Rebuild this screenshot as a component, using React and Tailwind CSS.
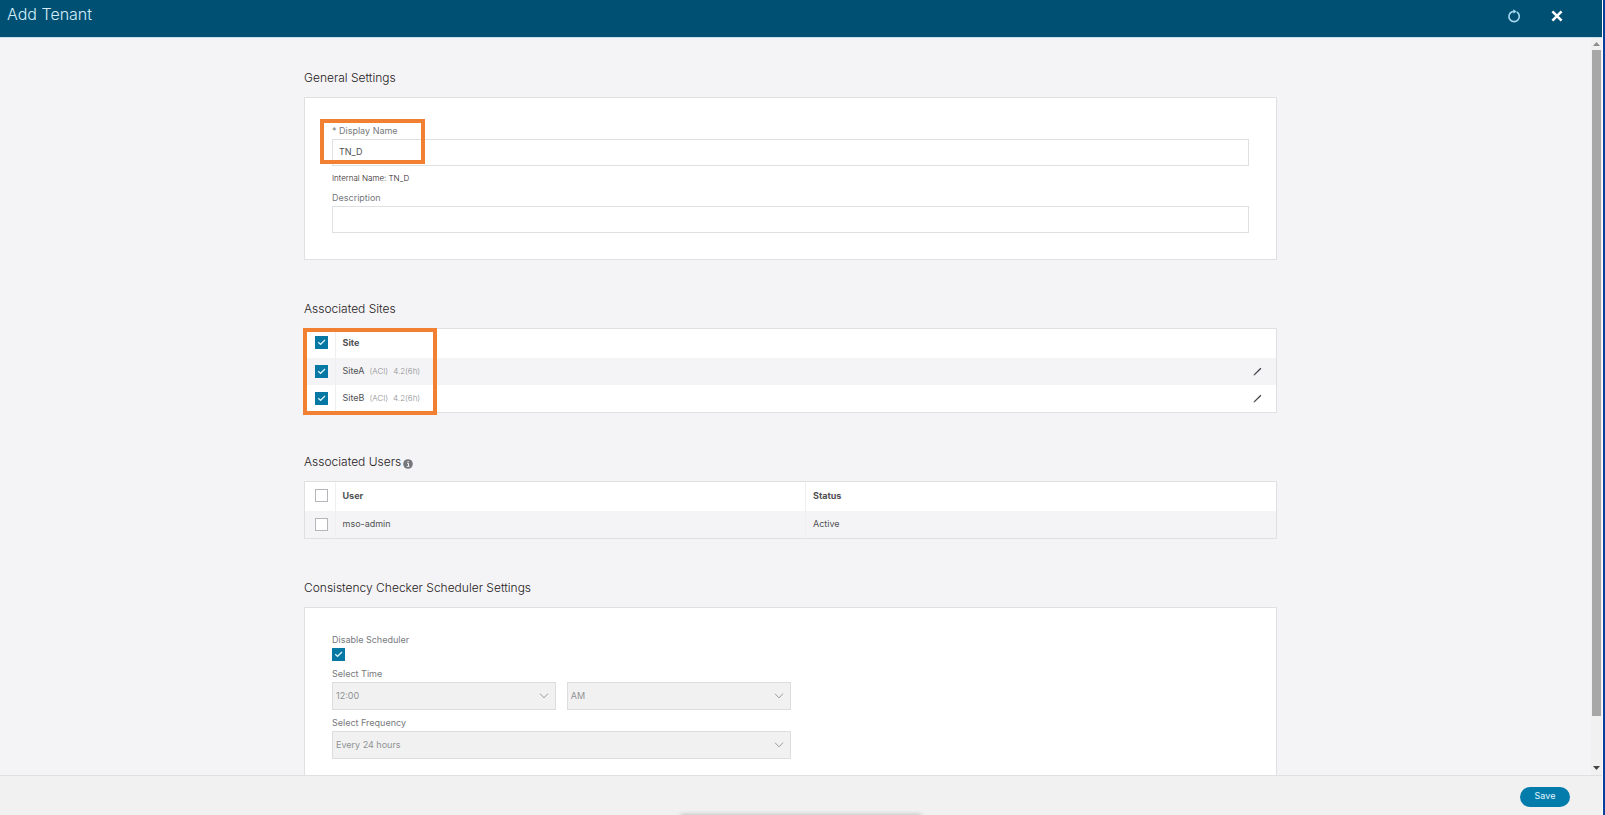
import React, { useState } from "react";

const sites = [
  { name: "SiteA", type: "(ACI)", version: "4.2(6h)" },
  { name: "SiteB", type: "(ACI)", version: "4.2(6h)" },
];

const users = [{ name: "mso-admin", status: "Active" }];

const Checkbox = ({ id, label, checked, onChange }) => (
  <span className="relative block size-[13px]">
    <input
      id={id}
      type="checkbox"
      aria-label={label}
      checked={checked}
      onChange={onChange}
      className="peer block size-[13px] appearance-none border border-[#b4b6b9] bg-white checked:border-[#0678a3] checked:bg-[#0678a3]"
    />
    <svg
      viewBox="0 0 13 13"
      className="pointer-events-none absolute inset-0 hidden size-[13px] peer-checked:block"
      fill="none"
      stroke="#d9f3ff"
      strokeWidth="1.3"
    >
      <path d="M3.2 6.2 5.6 8.3 10 4" />
    </svg>
  </span>
);

const Section = ({ title, info, children }) => (
  <section className="mb-[39px]">
    <h2 className="mb-[9px] flex h-5 items-center text-[12px] leading-5 font-light text-[#1f2022]">
      {title}
      {info && (
        <svg viewBox="0 0 10 10" className="mt-1 ml-[2px] size-[10px]">
          <circle cx="5" cy="5" r="4.8" fill="#75777a" />
          <path d="M4 4.2h1.5v3M3.8 7.3h2.6M4.6 2.5h1.1" stroke="#f4f4f6" fill="none" />
        </svg>
      )}
    </h2>
    {children}
  </section>
);

const Label = ({ htmlFor, children }) => (
  <label htmlFor={htmlFor} className="block h-[15px] text-[9px] leading-[14px] text-[#77797c]">
    {children}
  </label>
);

const Select = ({ id, label, value }) => (
  <div className="relative">
    <select
      id={id}
      aria-label={label}
      disabled
      defaultValue={value}
      className="block h-[28px] w-full appearance-none border border-[#dcdddf] bg-[#f1f1f1] px-[3px] pb-px text-[9px] text-[#8f9194]"
    >
      <option>{value}</option>
    </select>
    <svg
      viewBox="0 0 10 6"
      className="pointer-events-none absolute top-[11px] right-[7px] h-[6px] w-[10px]"
      fill="none"
      stroke="#9a9ca0"
    >
      <path d="M1 .7 5 4.9 9 .7" />
    </svg>
  </div>
);

const Pencil = () => (
  <svg viewBox="0 0 9 9" className="block size-[9px]">
    <path d="M1.7 7.4 7.9 1.2" stroke="#3f4144" strokeWidth="1.3" />
    <path d="M.5 8.6 1.1 6.8 2.3 8z" fill="#3f4144" />
  </svg>
);

const Scrollbar = () => (
  <div aria-hidden="true" className="flex w-[11px] flex-col items-center bg-[#f1f1f1]">
    <svg viewBox="0 0 7 4" className="mt-[4px] mb-[4px] h-[4px] w-[7px]">
      <path d="M0 4 3.5 0 7 4z" fill="#8b8d8f" />
    </svg>
    <div className="flex w-full flex-1 flex-col px-px">
      <div className="h-[93%] w-full bg-[#a6a7a6]" />
    </div>
    <svg viewBox="0 0 7 4" className="mb-[5px] h-[4px] w-[7px]">
      <path d="M0 0 3.5 4 7 0z" fill="#444648" />
    </svg>
  </div>
);

const App = () => {
  const [name, setName] = useState("TN_D");
  const [description, setDescription] = useState("");
  const [selectedSites, setSelectedSites] = useState(["SiteA", "SiteB"]);
  const [selectedUsers, setSelectedUsers] = useState([]);
  const [disabled, setDisabled] = useState(true);

  const toggle = (list, setList, item) =>
    setList(list.includes(item) ? list.filter((i) => i !== item) : [...list, item]);

  const toggleAll = (list, setList, all) => setList(list.length === all.length ? [] : all);

  const siteNames = sites.map((s) => s.name);
  const userNames = users.map((u) => u.name);

  return (
    <div className="flex h-screen bg-[#f4f4f6] font-['Inter','Liberation_Sans',sans-serif] text-[9px] text-[#505153]">
      <div className="flex min-w-0 flex-1 flex-col">
        <header className="flex h-[38px] shrink-0 items-start justify-between border-b border-[#c9dfeb] bg-[#005073] pr-[38px] pl-[7px]">
          <h1 className="pt-1 text-[16px] leading-5 font-light text-[#d3eefa]">Add Tenant</h1>
          <div className="flex items-center gap-[29px] pt-[9px]">
            <button type="button" aria-label="Refresh">
              <svg viewBox="0 0 14 14" className="block size-[14px]" fill="none" stroke="#a5d8f0" strokeWidth="1.6">
                <path d="M9.8 3A5.2 5.2 0 1 1 5 2.7L7.6 2.2" />
                <path d="M6.4.2v4.6L9.6 2.6z" fill="#a5d8f0" stroke="none" />
              </svg>
            </button>
            <button type="button" aria-label="Close">
              <svg viewBox="0 0 14 14" className="block size-[14px]" stroke="#fff" strokeWidth="2.6">
                <path d="M2.4 2.4l9.2 9.2M11.6 2.4l-9.2 9.2" />
              </svg>
            </button>
          </div>
        </header>

        <div className="flex min-h-0 flex-1">
          <main className="min-w-0 flex-1 overflow-y-auto pt-[30px] pr-[10px] [scrollbar-width:none]">
            <div className="mx-auto max-w-[973px]">
              <Section title="General Settings">
                <div className="border border-[#dfe0e2] bg-white px-[27px] pt-[26px] pb-[26px]">
                  <div className="relative">
                    <Label htmlFor="display-name">
                      <span className="inline-block w-[7px]">*</span>Display Name
                    </Label>
                    <input
                      id="display-name"
                      type="text"
                      value={name}
                      onChange={(e) => setName(e.target.value)}
                      className="block h-[27px] w-full border border-[#dfe0e2] bg-white px-[6px] pb-[2px]"
                    />
                    <div className="pointer-events-none absolute -top-[5px] -left-[12px] h-[45px] w-[105px] border-4 border-[#f28032]" />
                  </div>
                  <p className="my-[6px] text-[8px] leading-[13px] font-light text-[#1f2022]">Internal Name: {name}</p>
                  <Label htmlFor="description">Description</Label>
                  <input
                    id="description"
                    type="text"
                    value={description}
                    onChange={(e) => setDescription(e.target.value)}
                    className="block h-[27px] w-full border border-[#dfe0e2] bg-white px-[6px] pb-[2px]"
                  />
                </div>
              </Section>

              <Section title="Associated Sites">
                <div className="relative border border-[#dfe0e2] bg-white">
                  <table className="w-full table-fixed text-left">
                    <thead>
                      <tr className="h-[29px]">
                        <th className="w-[30px] border-r border-[#eeeff1] pb-[2px] pl-[10px]">
                          <Checkbox
                            label="Select all sites"
                            checked={selectedSites.length === sites.length}
                            onChange={() => toggleAll(selectedSites, setSelectedSites, siteNames)}
                          />
                        </th>
                        <th className="pb-[2px] pl-[7px] font-bold">Site</th>
                        <th className="w-[40px]" />
                      </tr>
                    </thead>
                    <tbody>
                      {sites.map((site) => (
                        <tr key={site.name} className="h-[27px] odd:bg-[#f4f4f6]">
                          <td className="border-r border-[#eeeff1] pl-[10px]">
                            <Checkbox
                              label={site.name}
                              checked={selectedSites.includes(site.name)}
                              onChange={() => toggle(selectedSites, setSelectedSites, site.name)}
                            />
                          </td>
                          <td className="pb-[2px] pl-[7px]">
                            {site.name}
                            <span className="ml-[5px] text-[8px] font-light text-[#8f9194]">{site.type}</span>
                            <span className="ml-[5px] text-[8px] font-light text-[#8f9194]">{site.version}</span>
                          </td>
                          <td className="pl-[17px]">
                            <button type="button" aria-label={`Edit ${site.name}`} className="block">
                              <Pencil />
                            </button>
                          </td>
                        </tr>
                      ))}
                    </tbody>
                  </table>
                  <div className="pointer-events-none absolute -top-px -bottom-[3px] -left-[2px] w-[134px] border-4 border-[#f28032]" />
                </div>
              </Section>

              <Section title="Associated Users" info>
                <div className="border border-[#dfe0e2] bg-white">
                  <table className="w-full table-fixed text-left">
                    <thead>
                      <tr className="h-[29px]">
                        <th className="w-[30px] border-r border-[#eeeff1] pb-[2px] pl-[10px]">
                          <Checkbox
                            label="Select all users"
                            checked={selectedUsers.length === users.length}
                            onChange={() => toggleAll(selectedUsers, setSelectedUsers, userNames)}
                          />
                        </th>
                        <th className="border-r border-[#eeeff1] pb-[2px] pl-[7px] font-bold">User</th>
                        <th className="pb-[2px] pl-[7px] font-bold">Status</th>
                      </tr>
                    </thead>
                    <tbody>
                      {users.map((user) => (
                        <tr key={user.name} className="h-[27px] odd:bg-[#f4f4f6]">
                          <td className="border-r border-[#eeeff1] pl-[10px]">
                            <Checkbox
                              label={user.name}
                              checked={selectedUsers.includes(user.name)}
                              onChange={() => toggle(selectedUsers, setSelectedUsers, user.name)}
                            />
                          </td>
                          <td className="border-r border-[#eeeff1] pb-[2px] pl-[7px]">{user.name}</td>
                          <td className="pb-[2px] pl-[7px]">{user.status}</td>
                        </tr>
                      ))}
                    </tbody>
                  </table>
                </div>
              </Section>

              <Section title="Consistency Checker Scheduler Settings">
                <div className="border border-[#dfe0e2] bg-white px-[27px] pt-[25px] pb-[27px]">
                  <div className="w-1/2">
                    <Label htmlFor="disable-scheduler">Disable Scheduler</Label>
                    <Checkbox id="disable-scheduler" checked={disabled} onChange={() => setDisabled(!disabled)} />
                    <div className="mt-[6px]">
                      <Label htmlFor="time">Select Time</Label>
                      <div className="grid grid-cols-2 gap-[11px]">
                        <Select id="time" value="12:00" />
                        <Select id="meridiem" label="AM or PM" value="AM" />
                      </div>
                    </div>
                    <div className="mt-[6px]">
                      <Label htmlFor="frequency">Select Frequency</Label>
                      <Select id="frequency" value="Every 24 hours" />
                    </div>
                  </div>
                </div>
              </Section>
            </div>
          </main>
          <Scrollbar />
        </div>

        <footer className="relative flex h-[40px] shrink-0 items-center justify-end overflow-hidden border-t border-[#dfe0e2] bg-[#f1f1f1] pt-[2px] pr-[32px]">
          <button type="button" className="h-5 w-[50px] rounded-full bg-[#047cab] pb-[2px] text-[9px] text-[#e3f6ff]">
            Save
          </button>
          <div className="absolute top-full left-1/2 h-2 w-[240px] -translate-x-1/2 shadow-[0_0_5px_0_#b0b0b0]" />
        </footer>
      </div>
      <div className="w-[3px] border-l border-white bg-[#07409a]" />
    </div>
  );
};

export default App;
